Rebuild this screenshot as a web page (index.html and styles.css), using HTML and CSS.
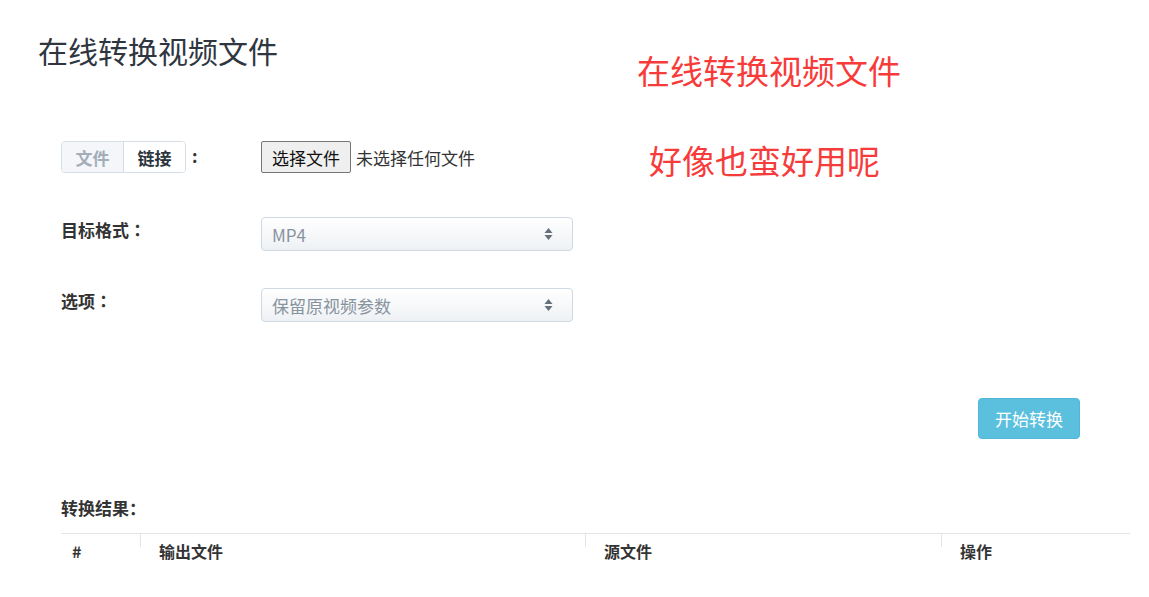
FILE: index.html
```html
<!DOCTYPE html>
<html lang="zh-CN">
<head>
<meta charset="utf-8">
<title>在线转换视频文件</title>
<link rel="stylesheet" href="styles.css">
</head>
<body>
<div class="page">
  <h1 class="title">在线转换视频文件</h1>
  <div class="note note-1">在线转换视频文件</div>
  <div class="note note-2">好像也蛮好用呢</div>

  <div class="form">
    <div class="row row-file">
      <div class="label">
        <span class="seg">
          <span class="seg-item seg-off">文件</span>
          <span class="seg-item seg-on">链接</span>
        </span>
        <span class="colon">:</span>
      </div>
      <div class="field">
        <span class="file-btn">选择文件</span>
        <span class="file-text">未选择任何文件</span>
      </div>
    </div>

    <div class="row row-select row-format">
      <div class="label label-text">目标格式<span class="fw-colon">：</span></div>
      <div class="field">
        <div class="select"><span>MP4</span><span class="arrows"><svg width="9" height="16" viewBox="0 0 9 16"><path d="M4.5 2 L8.5 7 L0.5 7 Z" fill="#66707c"/><path d="M4.5 14 L8.5 9 L0.5 9 Z" fill="#66707c"/></svg></span></div>
      </div>
    </div>

    <div class="row row-select row-option">
      <div class="label label-text">选项<span class="fw-colon">：</span></div>
      <div class="field">
        <div class="select"><span>保留原视频参数</span><span class="arrows"><svg width="9" height="16" viewBox="0 0 9 16"><path d="M4.5 2 L8.5 7 L0.5 7 Z" fill="#66707c"/><path d="M4.5 14 L8.5 9 L0.5 9 Z" fill="#66707c"/></svg></span></div>
      </div>
    </div>

    <div class="actions">
      <button class="start">开始转换</button>
    </div>

    <div class="result-label">转换结果<span class="fw-colon">：</span></div>
    <table class="table">
      <thead>
        <tr>
          <th class="c1">#</th>
          <th class="c2">输出文件</th>
          <th class="c3">源文件</th>
          <th class="c4">操作</th>
        </tr>
      </thead>
    </table>
  </div>
</div>
</body>
</html>
```

FILE: styles.css
```css
html, body {
  margin: 0;
  padding: 0;
  background: #ffffff;
}
body {
  font-family: "Microsoft YaHei", "Noto Sans CJK SC", "Noto Sans", sans-serif;
  color: #333333;
}
.page {
  position: relative;
  width: 1149px;
  height: 597px;
  overflow: hidden;
}
.title {
  margin: 0;
  padding: 30px 0 0 38px;
  font-size: 30px;
  font-weight: normal;
  line-height: 40px;
  color: #2f3640;
}
.note {
  position: absolute;
  color: #f73b3b;
  font-size: 33px;
  line-height: 40px;
  white-space: nowrap;
}
.note-1 { left: 637px; top: 50px; }
.note-2 { left: 649px; top: 140px; }

.form {
  padding: 0 19px 0 61px;
  margin-top: 71px;
}
.row {
  display: flex;
  align-items: flex-start;
}
.row-file { height: 32px; }
.row-select { height: 34px; }
.row-format { margin-top: 44px; }
.row-option { margin-top: 37px; }
.label {
  width: 200px;
  flex: none;
  display: flex;
  align-items: center;
}
.label-text {
  font-size: 17px;
  font-weight: bold;
  color: #333;
  line-height: 24px;
  padding-top: 1px;
}
.fw-colon {
  font-family: "Noto Sans CJK TC", "Noto Sans CJK SC", sans-serif;
}
.seg {
  display: inline-flex;
  border: 1px solid #d5dde6;
  border-radius: 4px;
  overflow: hidden;
  height: 30px;
}
.seg-item {
  display: flex;
  align-items: center;
  justify-content: center;
  font-size: 17px;
  font-weight: bold;
  padding: 0 13px;
  height: 30px;
}
.seg-off {
  color: #a3adb8;
  background: #f4f6f9;
  border-right: 1px solid #d5dde6;
  width: 35px;
}
.seg-on {
  color: #2b333c;
  background: #ffffff;
  width: 35px;
}
.colon {
  margin-left: 6px;
  font-size: 17px;
  font-weight: bold;
  color: #333;
  margin-top: -4px;
}
.field {
  display: flex;
  align-items: center;
  height: 100%;
}
.file-btn {
  box-sizing: border-box;
  height: 32px;
  width: 90px;
  display: flex;
  align-items: center;
  justify-content: center;
  font-size: 17px;
  color: #111;
  background: #efefef;
  border: 1px solid #767676;
  border-radius: 2px;
}
.file-text {
  margin-left: 5px;
  font-size: 17px;
  color: #333;
}
.select {
  box-sizing: border-box;
  width: 312px;
  height: 34px;
  border: 1px solid #cfd9e3;
  border-radius: 4px;
  background: linear-gradient(#ffffff, #eef1f4);
  display: flex;
  align-items: center;
  justify-content: space-between;
  padding: 0 19px 0 10px;
  font-size: 17px;
  color: #8893a0;
}
.arrows { display: flex; align-items: center; }

.actions {
  display: flex;
  justify-content: flex-end;
  padding-right: 50px;
  margin-top: 76px;
}
.start {
  width: 102px;
  height: 41px;
  border: 1px solid #4fb8d8;
  border-radius: 4px;
  background: #5bc0de;
  color: #ffffff;
  font-family: inherit;
  font-size: 17px;
  padding: 0;
}
.result-label {
  margin-top: 57px;
  font-size: 17px;
  font-weight: bold;
  line-height: 24px;
  color: #333;
}
.table {
  margin-top: 13px;
  width: 1069px;
  border-collapse: collapse;
  border-top: 1px solid #e2e5ea;
}
.table th {
  text-align: left;
  font-size: 16px;
  font-weight: bold;
  color: #333;
  height: 34px;
  padding: 0 0 0 19px;
  position: relative;
  vertical-align: middle;
}
.table th.c1 { width: 68px; padding-left: 11px; }
.table th.c2 { width: 426px; }
.table th.c3 { width: 337px; }
.table th + th::before {
  content: "";
  position: absolute;
  left: 0;
  top: 0;
  height: 13px;
  border-left: 1px solid #e2e5ea;
}
```
